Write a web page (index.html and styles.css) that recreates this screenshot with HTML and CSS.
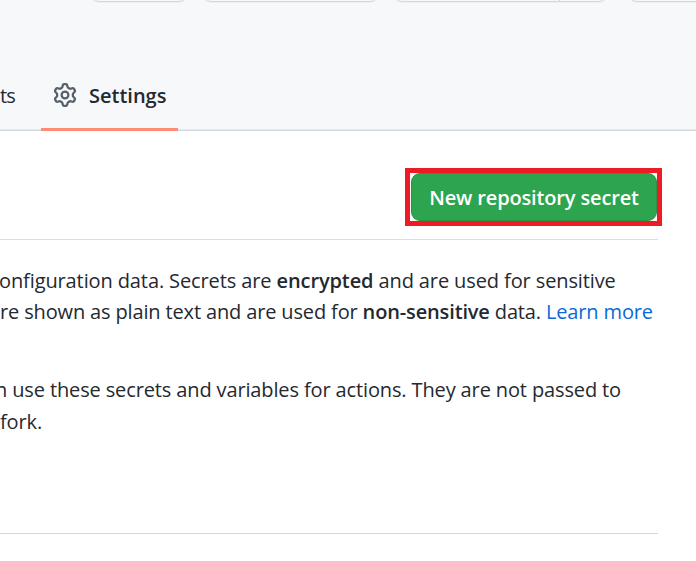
FILE: index.html
```html
<!DOCTYPE html>
<html lang="en">
<head>
<meta charset="utf-8">
<title>Actions secrets</title>
<link rel="stylesheet" href="styles.css">
</head>
<body>
<header class="repo-header">
  <div class="repo-actions">
    <span class="action pin"></span>
    <span class="action watch"></span>
    <span class="action fork"><span class="caret"></span></span>
    <span class="action star"></span>
  </div>
  <nav class="tabs">
    <a class="tab insights">ts</a>
    <a class="tab selected">
      <svg class="gear" viewBox="0 0 16 16" width="24" height="24" aria-hidden="true"><path d="M8 0a8.2 8.2 0 0 1 .701.031C9.444.095 9.99.645 10.16 1.29l.288 1.107c.018.066.079.158.212.224.231.114.454.243.668.386.123.082.233.09.299.071l1.103-.303c.644-.176 1.392.021 1.82.63.27.385.506.792.704 1.218.315.675.111 1.422-.364 1.891l-.814.806c-.049.048-.098.147-.088.294.016.257.016.515 0 .772-.01.147.038.246.088.294l.814.806c.475.469.679 1.216.364 1.891a7.977 7.977 0 0 1-.704 1.217c-.428.61-1.176.807-1.82.63l-1.102-.302c-.067-.019-.177-.011-.3.071a5.909 5.909 0 0 1-.668.386c-.133.066-.194.158-.211.224l-.29 1.106c-.168.646-.715 1.196-1.458 1.26a8.006 8.006 0 0 1-1.402 0c-.743-.064-1.289-.614-1.458-1.26l-.289-1.106c-.018-.066-.079-.158-.212-.224a5.738 5.738 0 0 1-.668-.386c-.123-.082-.233-.09-.299-.071l-1.103.303c-.644.176-1.392-.021-1.82-.63a8.12 8.12 0 0 1-.704-1.218c-.315-.675-.111-1.422.363-1.891l.815-.806c.05-.048.098-.147.088-.294a6.214 6.214 0 0 1 0-.772c.01-.147-.038-.246-.088-.294l-.815-.806C.635 6.045.431 5.298.746 4.623a7.92 7.92 0 0 1 .704-1.217c.428-.61 1.176-.807 1.82-.63l1.102.302c.067.019.177.011.3-.071.214-.143.437-.272.668-.386.133-.066.194-.158.211-.224l.29-1.106C6.009.645 6.556.095 7.299.03 7.53.01 7.764 0 8 0Zm-.571 1.525c-.036.003-.108.036-.137.146l-.289 1.105c-.147.561-.549.967-.998 1.189-.173.086-.34.183-.5.29-.417.278-.97.423-1.529.27l-1.103-.303c-.109-.03-.175.016-.195.045-.22.312-.412.644-.573.99-.014.031-.021.11.059.19l.815.806c.411.406.562.957.53 1.456a4.709 4.709 0 0 0 0 .582c.032.499-.119 1.05-.53 1.456l-.815.806c-.081.08-.073.159-.059.19.162.346.353.677.573.989.02.03.085.076.195.046l1.102-.303c.56-.153 1.113-.008 1.53.27.161.107.328.204.501.29.447.222.85.629.997 1.189l.289 1.105c.029.109.101.143.137.146a6.6 6.6 0 0 0 1.142 0c.036-.003.108-.036.137-.146l.289-1.105c.147-.561.549-.967.998-1.189.173-.086.34-.183.5-.29.417-.278.97-.423 1.529-.27l1.103.303c.109.029.175-.016.195-.045.22-.313.411-.644.573-.99.014-.031.021-.11-.059-.19l-.815-.806c-.411-.406-.562-.957-.53-1.456a4.709 4.709 0 0 0 0-.582c-.032-.499.119-1.05.53-1.456l.815-.806c.081-.08.073-.159.059-.19a6.464 6.464 0 0 0-.573-.989c-.02-.03-.085-.076-.195-.046l-1.102.303c-.56.153-1.113.008-1.53-.27a4.44 4.44 0 0 0-.501-.29c-.447-.222-.85-.629-.997-1.189l-.289-1.105c-.029-.11-.101-.143-.137-.146a6.6 6.6 0 0 0-1.142 0ZM11 8a3 3 0 1 1-6 0 3 3 0 0 1 6 0ZM9.5 8a1.5 1.5 0 1 0-3.001.001A1.5 1.5 0 0 0 9.5 8Z"/></svg>
      <span class="label">Settings</span>
    </a>
  </nav>
</header>
<main class="content">
  <div class="subhead">
    <div class="highlight"><button class="primary"><span>New repository secret</span></button></div>
  </div>
  <div class="copy">
    <p class="para first">
      <span class="line l1">onfiguration data. Secrets are <b>encrypted</b> and are used for sensitive</span>
      <span class="line l2">re shown as plain text and are used for <b>non-sensitive</b> data. <a>Learn more</a></span>
    </p>
    <p class="para second">
      <span class="line l3">n use these secrets and variables for actions. They are not passed to</span>
      <span class="line l4">fork.</span>
    </p>
  </div>
</main>
</body>
</html>
```
FILE: styles.css
```css
* { box-sizing: border-box; }

body {
  margin: 0;
  height: 561px;
  overflow: hidden;
  background: #fff;
  color: #24292f;
  font-family: "Open Sans", "Noto Sans", sans-serif;
  font-size: 20px;
}

.repo-header {
  display: flex;
  flex-direction: column;
  justify-content: space-between;
  height: 131px;
  background: #f6f8fa;
  box-shadow: inset 0 -1px #d0d7de, inset 0 -2px #e7eaee;
}

.repo-actions {
  display: flex;
  align-items: flex-end;
  height: 6px;
  padding: 0 0 4px 90px;
}

.action {
  flex: none;
  display: flex;
  justify-content: flex-end;
  height: 40px;
  border: 1px solid #d3d6da;
  border-radius: 9px;
  box-shadow: 0 1px 0 #eff1f3;
}

.pin { width: 98px; margin-right: 14px; }
.watch { width: 177px; margin-right: 14px; }
.fork { width: 215px; margin-right: 20px; }
.star {
  flex: 1;
  border-right: 0;
  border-radius: 9px 0 0 9px;
}
.caret { width: 48px; border-left: 1px solid #d3d6da; }

.tabs {
  display: flex;
  gap: 26px;
  height: 69px;
}

.tab {
  display: flex;
  height: 69px;
  white-space: nowrap;
  line-height: 68px;
}

.insights { width: 15px; letter-spacing: -0.8px; }

.selected {
  gap: 12px;
  width: 137px;
  padding-left: 12px;
  background: linear-gradient(#fd8c73, #fd8c73) bottom / 100% 3px no-repeat;
  font-weight: 600;
}

.gear { margin-top: 21px; fill: #57606a; }

.subhead {
  display: flex;
  justify-content: flex-end;
  width: 658px;
  height: 109px;
  padding-top: 37px;
  border-bottom: 1px solid #d8dee4;
}

.highlight {
  flex: none;
  width: 257px;
  height: 58px;
  margin-right: -4px;
  padding: 0 0 0 1px;
  border: 5px solid #ed1c24;
}

.primary {
  display: block;
  width: 100%;
  height: 48px;
  padding: 1px 0 0;
  border: 1px solid #2b9348;
  border-radius: 9px;
  background: #2da44e;
  color: #fff;
  font: 600 20px/45px "Open Sans", "Noto Sans", sans-serif;
  letter-spacing: -0.15px;
  white-space: nowrap;
}

.copy {
  width: 658px;
  height: 294px;
  padding-top: 25px;
  border-bottom: 1px solid #d0d7de;
}

.para { margin: 0 0 15px; }
.first { margin-bottom: 47px; }

.line {
  display: block;
  width: max-content;
  line-height: 31px;
  letter-spacing: -0.13px;
  white-space: nowrap;
}

.l1 { margin-left: -1px; letter-spacing: -0.11px; }
.l2 { letter-spacing: -0.145px; }
.l3 { margin-left: -5px; }
.l4 { line-height: 33px; }

b { font-weight: 600; }
a { color: inherit; }
.line a { color: #0969da; }
```
